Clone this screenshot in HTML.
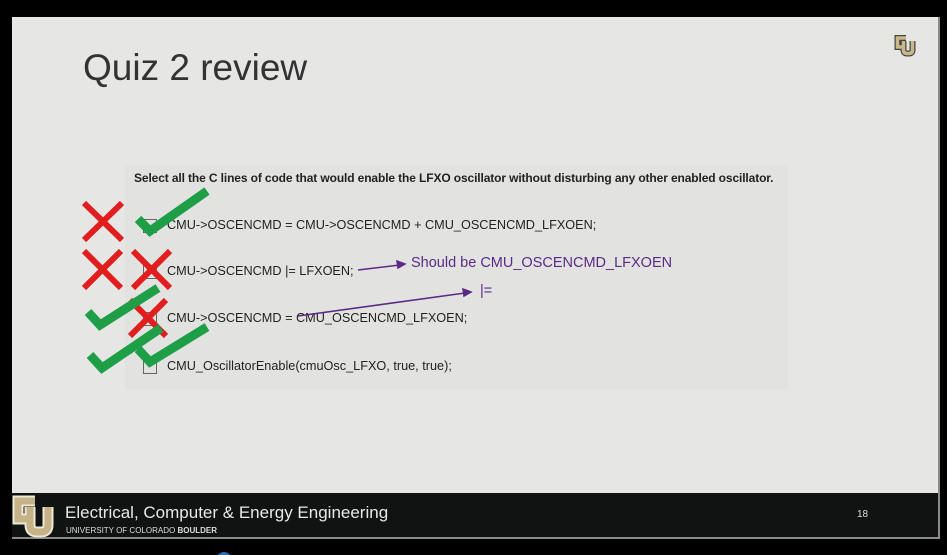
<!DOCTYPE html>
<html><head><meta charset="utf-8"><style>
body{margin:0;width:947px;height:555px;background:#000;position:relative;overflow:hidden;font-family:"Liberation Sans",Arial,sans-serif}
.slide{position:absolute;left:12px;top:17px;width:926px;height:476px;background:#e6e7e5;border-right:2px solid #8a8b89}
.title{position:absolute;left:83px;top:47px;font-size:37px;color:#333}
.panel{position:absolute;left:125px;top:165px;width:663px;height:225px;background:#e2e3e1}
.q{position:absolute;left:134px;top:171px;font-size:12px;font-weight:bold;color:#222;letter-spacing:-0.12px}
.code{position:absolute;left:167px;font-size:12.7px;color:#222}
.box{position:absolute;left:143px;width:12px;height:12px;border:1px solid #666}
.footer{position:absolute;left:12px;top:493px;width:926px;height:44px;background:#111312;border-right:2px solid #8a8b89;border-bottom:2px solid #8a8b89}
.ft{position:absolute;left:65px;top:503px;font-size:17px;color:#e8e8e8}
.fs{position:absolute;left:66px;top:526px;font-size:8px;color:#ddd}
.pg{position:absolute;left:857px;top:509px;font-size:10px;color:#ddd}
.ann{position:absolute;color:#5b2a86;font-size:14.5px}
svg{position:absolute;left:0;top:0}
</style></head><body>
<div class="slide"></div>
<div class="title">Quiz 2 review</div>
<div class="panel"></div>
<div class="q">Select all the C lines of code that would enable the LFXO oscillator without disturbing any other enabled oscillator.</div>
<div class="box" style="top:219px"></div>
<div class="box" style="top:265px"></div>
<div class="box" style="top:312px"></div>
<div class="box" style="top:360px"></div>
<div class="code" style="top:218px">CMU-&gt;OSCENCMD = CMU-&gt;OSCENCMD + CMU_OSCENCMD_LFXOEN;</div>
<div class="code" style="top:264px">CMU-&gt;OSCENCMD |= LFXOEN;</div>
<div class="code" style="top:311px">CMU-&gt;OSCENCMD = CMU_OSCENCMD_LFXOEN;</div>
<div class="code" style="top:359px">CMU_OscillatorEnable(cmuOsc_LFXO, true, true);</div>
<div class="ann" style="left:411px;top:255px">Should be CMU_OSCENCMD_LFXOEN</div>
<div class="ann" style="left:480px;top:283px">|=</div>
<div class="footer"></div>
<div class="ft">Electrical, Computer &amp; Energy Engineering</div>
<div class="fs">UNIVERSITY OF COLORADO <b>BOULDER</b></div>
<div class="pg">18</div>
<svg width="947" height="555">
<g stroke="#e11d1d" stroke-width="6" fill="none">
<path d="M84 203L122 240M122 203L84 240"/>
<path d="M84 251L121 288M121 251L84 288"/>
<path d="M133 251L170 288M170 251L133 288"/>
<path d="M130 300L166 336M166 300L130 336"/>
</g>
<g stroke="#1f9e48" stroke-width="9" fill="none" stroke-linejoin="miter">
<path d="M138 219L150 231L207 191"/>
<path d="M88 312L100 325L158 288"/>
<path d="M90 355L102 368L161 328"/>
<path d="M138 349L150 362L207 327"/>
</g>
<g stroke="#5b2a86" stroke-width="1.5" fill="#5b2a86">
<path d="M358 270L400 265" fill="none"/><path d="M405 264L397 261L398 268Z"/>
<path d="M298 316L465 293" fill="none"/><path d="M471 292L463 289L464 296Z"/>
</g>
<g id="cu" transform="translate(13,495)" fill="none" stroke-linejoin="miter">
<path d="M22 6H5V24H14" stroke="#eee8d6" stroke-width="11"/>
<path d="M17 12V30Q17 37 24 37H28Q35 37 35 30V12" stroke="#eee8d6" stroke-width="11"/>
<path d="M22 6H5V24H14" stroke="#c5b387" stroke-width="7"/>
<path d="M17 12V30Q17 37 24 37H28Q35 37 35 30V12" stroke="#c5b387" stroke-width="7"/>
</g>
<g transform="translate(895,35) scale(0.5)" fill="none">
<path d="M22 6H5V24H14" stroke="#444" stroke-width="12"/>
<path d="M17 12V30Q17 37 24 37H28Q35 37 35 30V12" stroke="#444" stroke-width="12"/>
<path d="M22 6H5V24H14" stroke="#c9b98a" stroke-width="7"/>
<path d="M17 12V30Q17 37 24 37H28Q35 37 35 30V12" stroke="#c9b98a" stroke-width="7"/>
</g>
<circle cx="224" cy="560" r="8" fill="#2a6db5"/>
</svg>
</body></html>
